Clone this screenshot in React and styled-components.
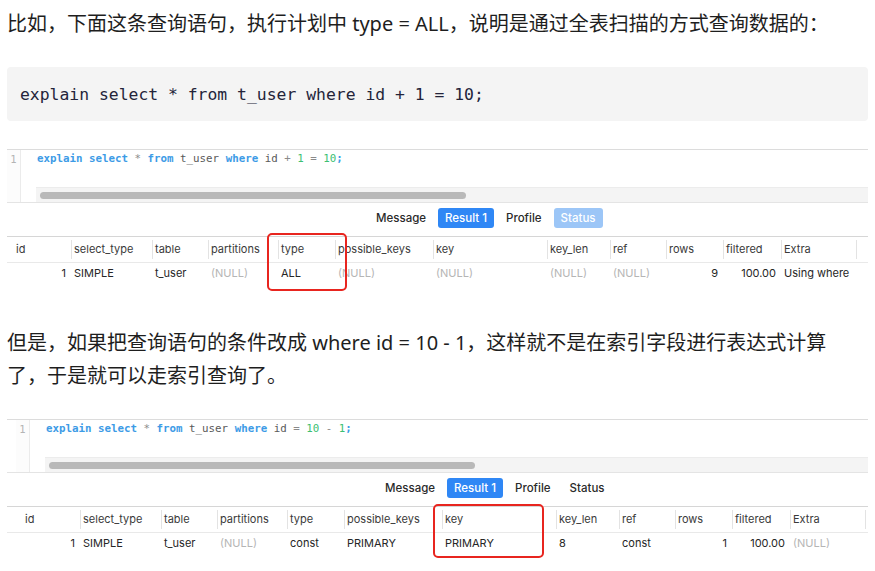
import React from "react";
import styled, { createGlobalStyle } from "styled-components";

const GlobalStyle = createGlobalStyle`
  body {
    margin: 0;
    background: #fff;
  }
`;

const COLS = [
  { name: "id", w: 64, align: "right" },
  { name: "select_type", w: 81 },
  { name: "table", w: 56 },
  { name: "partitions", w: 70 },
  { name: "type", w: 57 },
  { name: "possible_keys", w: 98 },
  { name: "key", w: 114 },
  { name: "key_len", w: 63 },
  { name: "ref", w: 56 },
  { name: "rows", w: 57, align: "right" },
  { name: "filtered", w: 58, align: "right" },
  { name: "Extra", w: 75 },
];

const GRID = COLS.map((c) => `${c.w}px`).join(" ") + " 1fr";

const Page = styled.div`
  display: flex;
  flex-direction: column;
  padding: 7px 7px 0;
  font-family: "Noto Sans", "Noto Sans CJK SC", sans-serif;
  color: #1e1e1e;
`;

const Para = styled.p`
  margin: ${(p) => p.$top || 0}px 0 0;
  font-size: 20px;
  line-height: 33px;
`;

const CodeBlock = styled.pre`
  margin: 27px 0 0;
  height: 54px;
  display: flex;
  align-items: center;
  padding: 0 13px;
  background: #f4f4f4;
  border-radius: 4px;
  font-family: "DejaVu Sans Mono", monospace;
  font-size: 16.4px;
  color: #24243a;
`;

const Panel = styled.div`
  position: relative;
  margin-top: ${(p) => p.$top}px;
  height: 148px;
  border-top: 1px solid #dcdcdc;
  overflow: hidden;
  font-family: Inter, "Liberation Sans", sans-serif;
  font-size: 11px;
  color: #333;
`;

const Editor = styled.div`
  display: flex;
  height: 52px;
  padding-left: ${(p) => p.$inset}px;
  border-bottom: 1px solid #e4e4e4;
`;

const Gutter = styled.div`
  width: 13px;
  flex: none;
  border-right: 1px solid #ebebeb;
  background: #fcfcfc;
  text-align: center;
  font-family: "DejaVu Sans Mono", monospace;
  font-size: 10.5px;
  line-height: 18px;
  color: #b4b4b4;
`;

const EditorMain = styled.div`
  flex: 1;
  display: flex;
  flex-direction: column;
`;

const CodeLine = styled.div`
  height: 18px;
  line-height: 18px;
  padding-left: 16px;
  font-family: "DejaVu Sans Mono", monospace;
  font-size: 10.8px;
  white-space: pre;
`;

const Tok = styled.span`
  color: ${(p) =>
    p.$kind === "kw"
      ? "#3d9be6"
      : p.$kind === "num"
      ? "#3cbf72"
      : p.$kind === "op"
      ? "#8a8a8a"
      : "#5a5a5a"};
  font-weight: ${(p) => (p.$kind === "kw" ? 700 : 400)};
`;

const Track = styled.div`
  margin-top: auto;
  margin-left: 15px;
  height: 14px;
  display: flex;
  align-items: center;
  background: #f4f4f4;
  border-top: 1px solid #ececec;
`;

const Thumb = styled.div`
  margin-left: 4px;
  width: 426px;
  height: 7px;
  border-radius: 4px;
  background: #b9b9b9;
`;

const Tabs = styled.div`
  display: flex;
  gap: 5px;
  padding: 5px 0 8px ${(p) => p.$inset + 362}px;
`;

const Tab = styled.span`
  height: 20px;
  line-height: 21px;
  padding: 0 7px;
  border-radius: 3px;
  font-weight: 500;
  font-size: 11.5px;
  color: ${(p) => (p.$variant === "plain" ? "#2a2a2a" : "#fff")};
  background: ${(p) =>
    p.$variant === "active"
      ? "#2f87f5"
      : p.$variant === "muted"
      ? "#9cc6f7"
      : "transparent"};
`;

const Row = styled.div`
  display: grid;
  grid-template-columns: ${GRID};
  align-items: center;
  padding-left: ${(p) => p.$inset}px;
`;

const HeadRow = styled(Row)`
  height: 25px;
  border-top: 1px solid #d6d6d6;
  border-bottom: 1px solid #e9e9e9;
`;

const DataRow = styled(Row)`
  height: 19px;
`;

const HeadCell = styled.div`
  height: 19px;
  line-height: 19px;
  padding-left: ${(p) => (p.$first ? 9 : 2)}px;
  border-left: ${(p) => (p.$first ? "none" : "1px solid #e3e3e3")};
  white-space: nowrap;
  color: #3a3a3a;
`;

const Cell = styled.div`
  padding: 0 5px 0 3px;
  text-align: ${(p) => p.$align || "left"};
  white-space: nowrap;
  color: ${(p) => (p.$null ? "#b5b5b5" : "#262626")};
`;

const Mark = styled.div`
  position: absolute;
  left: ${(p) => p.$x}px;
  top: ${(p) => p.$y}px;
  width: ${(p) => p.$w}px;
  height: ${(p) => p.$h}px;
  border: 2px solid #e8251f;
  border-radius: 5px;
  box-sizing: border-box;
`;

const ResultPanel = ({ top, inset, code, statusMuted, row, mark }) => (
  <Panel $top={top}>
    <Editor $inset={inset}>
      <Gutter>1</Gutter>
      <EditorMain>
        <CodeLine>
          {code.map(([text, kind], i) => (
            <Tok key={i} $kind={kind}>
              {text}
            </Tok>
          ))}
        </CodeLine>
        <Track>
          <Thumb />
        </Track>
      </EditorMain>
    </Editor>
    <Tabs $inset={inset}>
      <Tab $variant="plain">Message</Tab>
      <Tab $variant="active">Result 1</Tab>
      <Tab $variant="plain">Profile</Tab>
      <Tab $variant={statusMuted ? "muted" : "plain"}>Status</Tab>
    </Tabs>
    <HeadRow $inset={inset}>
      {COLS.map((c, i) => (
        <HeadCell key={c.name} $first={i === 0}>
          {c.name}
        </HeadCell>
      ))}
      <HeadCell />
    </HeadRow>
    <DataRow $inset={inset}>
      {row.map((v, i) => (
        <Cell key={i} $align={COLS[i].align} $null={v === "(NULL)"}>
          {v}
        </Cell>
      ))}
    </DataRow>
    <Mark $x={mark[0]} $y={mark[1]} $w={mark[2]} $h={mark[3]} />
  </Panel>
);

const CODE_1 = [
  ["explain", "kw"], [" "], ["select", "kw"], [" "], ["*", "op"], [" "],
  ["from", "kw"], [" t_user "], ["where", "kw"], [" id "], ["+", "op"],
  [" "], ["1", "num"], [" "], ["=", "op"], [" "], ["10", "num"], [";", "kw"],
];

const CODE_2 = [
  ["explain", "kw"], [" "], ["select", "kw"], [" "], ["*", "op"], [" "],
  ["from", "kw"], [" t_user "], ["where", "kw"], [" id "], ["=", "op"],
  [" "], ["10", "num"], [" "], ["-", "op"], [" "], ["1", "num"], [";", "kw"],
];

const ROW_1 = ["1", "SIMPLE", "t_user", "(NULL)", "ALL", "(NULL)", "(NULL)", "(NULL)", "(NULL)", "9", "100.00", "Using where"];
const ROW_2 = ["1", "SIMPLE", "t_user", "(NULL)", "const", "PRIMARY", "PRIMARY", "8", "const", "1", "100.00", "(NULL)"];

export default function App() {
  return (
    <>
      <GlobalStyle />
      <Page>
        <Para>比如，下面这条查询语句，执行计划中 type = ALL，说明是通过全表扫描的方式查询数据的：</Para>
        <CodeBlock>explain select * from t_user where id + 1 = 10;</CodeBlock>
        <ResultPanel
          top={28}
          inset={0}
          code={CODE_1}
          statusMuted
          row={ROW_1}
          mark={[260, 83, 80, 58]}
        />
        <Para $top={28}>
          但是，如果把查询语句的条件改成 where id = 10 - 1，这样就不是在索引字段进行表达式计算
          <br />
          了，于是就可以走索引查询了。
        </Para>
        <ResultPanel
          top={27}
          inset={9}
          code={CODE_2}
          row={ROW_2}
          mark={[426, 84, 111, 54]}
        />
      </Page>
    </>
  );
}
